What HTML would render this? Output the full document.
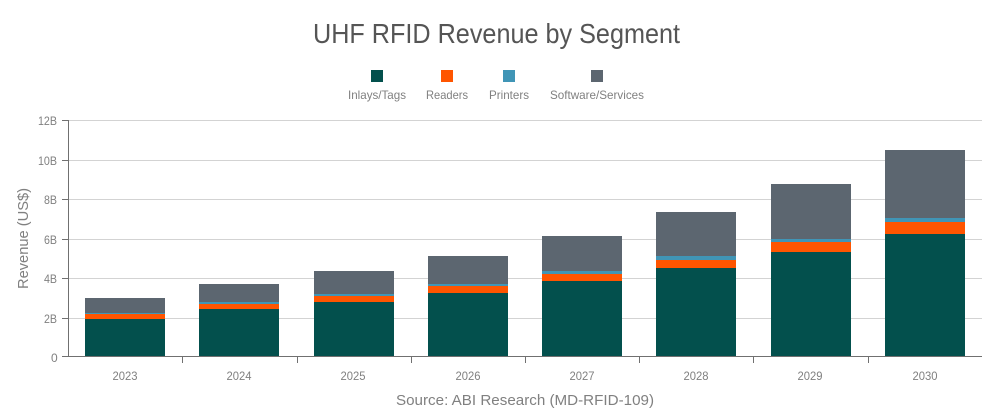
<!DOCTYPE html>
<html>
<head>
<meta charset="utf-8">
<style>
html,body{margin:0;padding:0;background:#fff;width:992px;height:420px;overflow:hidden}
svg{display:block}
text{font-family:"Liberation Sans",sans-serif;fill:#808080}
</style>
</head>
<body>
<svg width="992" height="420" viewBox="0 0 992 420" xmlns="http://www.w3.org/2000/svg">
<text x="313" y="43" font-size="28" style="fill:#555555" textLength="367" lengthAdjust="spacingAndGlyphs">UHF RFID Revenue by Segment</text>

<g shape-rendering="crispEdges">
<rect x="371" y="70" width="12" height="12" fill="#03504d"/>
<rect x="441" y="70" width="12" height="12" fill="#ff5500"/>
<rect x="503" y="70" width="12" height="12" fill="#4095b6"/>
<rect x="591" y="70" width="12" height="12" fill="#5c6670"/>
</g>
<g font-size="12">
<text x="348" y="99" textLength="58" lengthAdjust="spacingAndGlyphs">Inlays/Tags</text>
<text x="426" y="99" textLength="42" lengthAdjust="spacingAndGlyphs">Readers</text>
<text x="489" y="99" textLength="40" lengthAdjust="spacingAndGlyphs">Printers</text>
<text x="550" y="99" textLength="94" lengthAdjust="spacingAndGlyphs">Software/Services</text>
</g>

<g fill="#d3d3d3" shape-rendering="crispEdges">
<rect x="68" y="120" width="914" height="1"/>
<rect x="68" y="160" width="914" height="1"/>
<rect x="68" y="199" width="914" height="1"/>
<rect x="68" y="239" width="914" height="1"/>
<rect x="68" y="278" width="914" height="1"/>
<rect x="68" y="318" width="914" height="1"/>
</g>

<g shape-rendering="crispEdges">
<!-- 2023 -->
<rect x="85" y="298" width="80" height="15" fill="#5c6670"/>
<rect x="85" y="313" width="80" height="1" fill="#4095b6"/>
<rect x="85" y="314" width="80" height="5" fill="#ff5500"/>
<rect x="85" y="319" width="80" height="37" fill="#03504d"/>
<!-- 2024 -->
<rect x="199" y="284" width="80" height="18" fill="#5c6670"/>
<rect x="199" y="302" width="80" height="2" fill="#4095b6"/>
<rect x="199" y="304" width="80" height="5" fill="#ff5500"/>
<rect x="199" y="309" width="80" height="47" fill="#03504d"/>
<!-- 2025 -->
<rect x="314" y="271" width="80" height="23" fill="#5c6670"/>
<rect x="314" y="294" width="80" height="2" fill="#4095b6"/>
<rect x="314" y="296" width="80" height="6" fill="#ff5500"/>
<rect x="314" y="302" width="80" height="54" fill="#03504d"/>
<!-- 2026 -->
<rect x="428" y="256" width="80" height="28" fill="#5c6670"/>
<rect x="428" y="284" width="80" height="2" fill="#4095b6"/>
<rect x="428" y="286" width="80" height="7" fill="#ff5500"/>
<rect x="428" y="293" width="80" height="63" fill="#03504d"/>
<!-- 2027 -->
<rect x="542" y="236" width="80" height="35" fill="#5c6670"/>
<rect x="542" y="271" width="80" height="3" fill="#4095b6"/>
<rect x="542" y="274" width="80" height="7" fill="#ff5500"/>
<rect x="542" y="281" width="80" height="75" fill="#03504d"/>
<!-- 2028 -->
<rect x="656" y="212" width="80" height="44" fill="#5c6670"/>
<rect x="656" y="256" width="80" height="4" fill="#4095b6"/>
<rect x="656" y="260" width="80" height="8" fill="#ff5500"/>
<rect x="656" y="268" width="80" height="88" fill="#03504d"/>
<!-- 2029 -->
<rect x="771" y="184" width="80" height="55" fill="#5c6670"/>
<rect x="771" y="239" width="80" height="3" fill="#4095b6"/>
<rect x="771" y="242" width="80" height="10" fill="#ff5500"/>
<rect x="771" y="252" width="80" height="104" fill="#03504d"/>
<!-- 2030 -->
<rect x="885" y="150" width="80" height="68" fill="#5c6670"/>
<rect x="885" y="218" width="80" height="4" fill="#4095b6"/>
<rect x="885" y="222" width="80" height="12" fill="#ff5500"/>
<rect x="885" y="234" width="80" height="122" fill="#03504d"/>
</g>

<g fill="#707070" shape-rendering="crispEdges">
<rect x="68" y="120" width="1" height="237"/>
<rect x="62" y="356" width="920" height="1"/>
<rect x="62" y="120" width="6" height="1"/>
<rect x="62" y="160" width="6" height="1"/>
<rect x="62" y="199" width="6" height="1"/>
<rect x="62" y="239" width="6" height="1"/>
<rect x="62" y="278" width="6" height="1"/>
<rect x="62" y="318" width="6" height="1"/>
<rect x="182" y="356" width="1" height="7"/>
<rect x="297" y="356" width="1" height="7"/>
<rect x="411" y="356" width="1" height="7"/>
<rect x="525" y="356" width="1" height="7"/>
<rect x="639" y="356" width="1" height="7"/>
<rect x="753" y="356" width="1" height="7"/>
<rect x="868" y="356" width="1" height="7"/>
</g>

<g font-size="12">
<text x="38" y="125" textLength="19" lengthAdjust="spacingAndGlyphs">12B</text>
<text x="38" y="165" textLength="19" lengthAdjust="spacingAndGlyphs">10B</text>
<text x="44" y="204" textLength="13" lengthAdjust="spacingAndGlyphs">8B</text>
<text x="44" y="244" textLength="13" lengthAdjust="spacingAndGlyphs">6B</text>
<text x="44" y="283" textLength="13" lengthAdjust="spacingAndGlyphs">4B</text>
<text x="44" y="323" textLength="13" lengthAdjust="spacingAndGlyphs">2B</text>
<text x="51" y="362">0</text>
</g>

<g font-size="12">
<text x="112.500" y="380" textLength="25" lengthAdjust="spacingAndGlyphs">2023</text>
<text x="226.500" y="380" textLength="25" lengthAdjust="spacingAndGlyphs">2024</text>
<text x="340.500" y="380" textLength="25" lengthAdjust="spacingAndGlyphs">2025</text>
<text x="455.500" y="380" textLength="25" lengthAdjust="spacingAndGlyphs">2026</text>
<text x="569.500" y="380" textLength="25" lengthAdjust="spacingAndGlyphs">2027</text>
<text x="683.500" y="380" textLength="25" lengthAdjust="spacingAndGlyphs">2028</text>
<text x="797.500" y="380" textLength="25" lengthAdjust="spacingAndGlyphs">2029</text>
<text x="912.500" y="380" textLength="25" lengthAdjust="spacingAndGlyphs">2030</text>
</g>

<text transform="translate(28 289) rotate(-90)" font-size="15" textLength="101" lengthAdjust="spacingAndGlyphs">Revenue (US$)</text>
<text x="396" y="405" font-size="15" textLength="258" lengthAdjust="spacingAndGlyphs">Source: ABI Research (MD-RFID-109)</text>
</svg>
</body>
</html>
